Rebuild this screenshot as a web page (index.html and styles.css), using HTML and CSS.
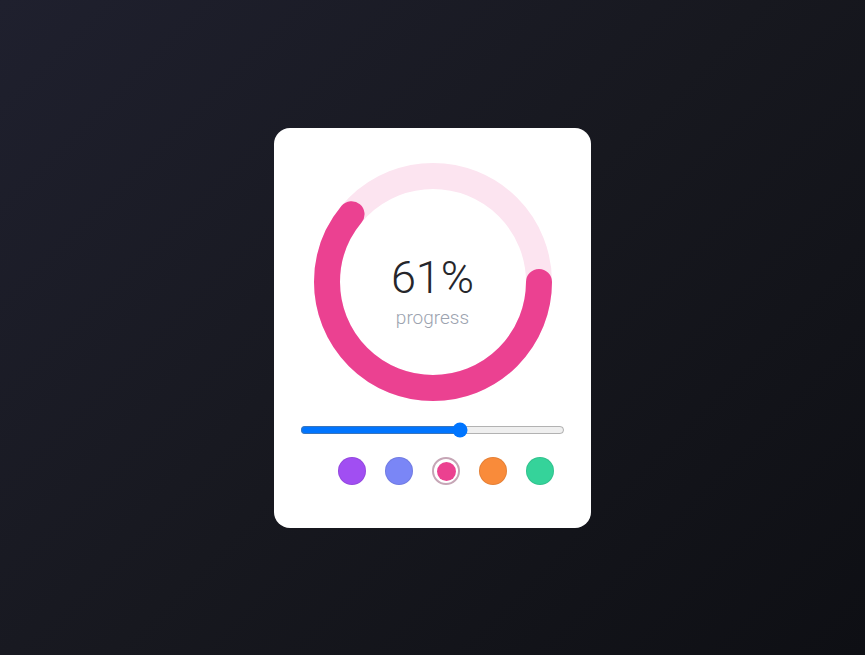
FILE: index.html
```html
<!DOCTYPE html>
<html lang="en">
<head>
<meta charset="utf-8">
<title>Progress</title>
<link rel="stylesheet" href="styles.css">
</head>
<body>
<div class="card">
  <div class="ring">
    <svg class="ring-svg" width="240" height="240" viewBox="0 0 240 240">
      <circle class="ring-track" cx="120" cy="120" r="106"></circle>
      <circle class="ring-bar" cx="120" cy="120" r="106" style="stroke-dasharray: 406.27 666.02"></circle>
    </svg>
    <div class="ring-label">
      <div class="value">61%</div>
      <div class="caption">progress</div>
    </div>
  </div>
  <input class="slider" type="range" min="0" max="100" value="61">
  <div class="swatches">
    <span class="swatch purple"></span>
    <span class="swatch indigo"></span>
    <span class="swatch pink selected"></span>
    <span class="swatch orange"></span>
    <span class="swatch green"></span>
  </div>
</div>
</body>
</html>
```

FILE: styles.css
```css
html, body {
  margin: 0;
  padding: 0;
}

body {
  min-height: 100vh;
  display: flex;
  align-items: center;
  justify-content: center;
  background: linear-gradient(135deg, #1f202e 0%, #17181f 50%, #0e0f14 100%);
  font-family: Roboto, "Liberation Sans", sans-serif;
}

.card {
  box-sizing: border-box;
  width: 317px;
  height: 400px;
  background: #ffffff;
  border-radius: 16px;
  padding: 34px 27px 0;
  display: flex;
  flex-direction: column;
  align-items: center;
}

.ring {
  position: relative;
  width: 240px;
  height: 240px;
}

.ring-svg {
  display: block;
}

.ring-track {
  fill: none;
  stroke: #fce4f0;
  stroke-width: 26;
}

.ring-bar {
  fill: none;
  stroke: #eb4191;
  stroke-width: 26;
  stroke-linecap: round;
}

.ring-label {
  position: absolute;
  inset: 0;
  box-sizing: border-box;
  padding-top: 19px;
  display: flex;
  flex-direction: column;
  align-items: center;
  justify-content: center;
}

.value {
  font-size: 45px;
  font-weight: 300;
  line-height: 44px;
  color: #26262b;
}

.caption {
  margin-top: 8px;
  font-size: 19px;
  font-weight: 300;
  line-height: 19px;
  color: #9ca3af;
}

.slider {
  width: 265px;
  height: 16px;
  margin: 20px 0 0;
  accent-color: #0075ff;
}

.swatches {
  box-sizing: border-box;
  width: 263px;
  margin-top: 19px;
  padding-left: 37px;
  display: flex;
  gap: 19px;
}

.swatch {
  box-sizing: border-box;
  width: 28px;
  height: 28px;
  border-radius: 50%;
  border: 1px solid rgba(0, 0, 0, 0.08);
}

.purple { background: #a14ef2; }
.indigo { background: #7a86f6; }
.pink { background: #eb4190; }
.orange { background: #f98b3a; }
.green { background: #35d39a; }

.swatch.selected {
  border: 2.5px solid #c6a6b6;
  padding: 2.5px;
  background-clip: content-box;
}
```
